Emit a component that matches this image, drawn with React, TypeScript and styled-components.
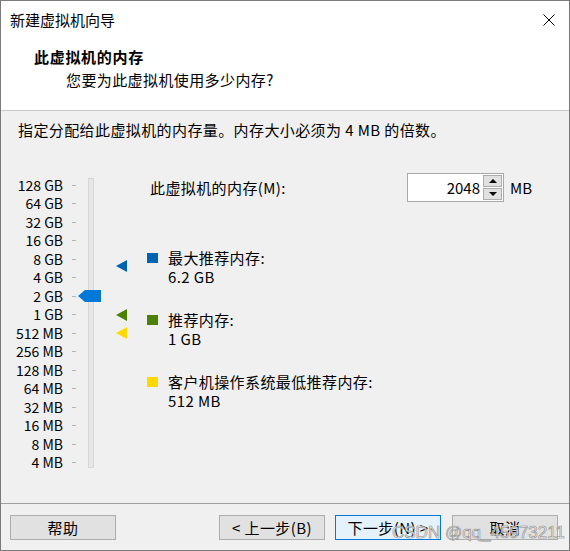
import React from "react";
import styled, { createGlobalStyle } from "styled-components";

const GlobalStyle = createGlobalStyle`
  html, body {
    margin: 0;
    padding: 0;
    background: #ffffff;
  }
  body {
    font-family: "Noto Sans CJK SC", "Noto Sans", sans-serif;
    font-size: 15px;
    color: #000000;
  }
`;

const ROW_H = 18.53;
const FIRST_ROW = 185; // centre of "128 GB" in page coords
const SCALE_TOP = 176; // top of the scale column

const Window = styled.div`
  position: relative;
  width: 570px;
  height: 551px;
  box-sizing: border-box;
  border: 1px solid #7a7a7a;
  display: flex;
  flex-direction: column;
  background: #f0f0f0;
  overflow: hidden;
`;

const TitleBar = styled.div`
  height: 38px;
  background: #ffffff;
  display: flex;
  align-items: center;
  justify-content: space-between;
  padding: 0 14px 0 9px;
  font-size: 15px;
  line-height: 20px;
`;

const CloseButton = styled.div`
  width: 12px;
  height: 12px;
  display: flex;
`;

const Header = styled.div`
  height: 71px;
  background: #ffffff;
  border-bottom: 1px solid #c8c8c8;
  padding-left: 33px;
  box-sizing: content-box;
  display: flex;
  flex-direction: column;
`;

const Heading = styled.div`
  margin-top: 7px;
  font-weight: bold;
  font-size: 15px;
  letter-spacing: 0.7px;
  line-height: 22px;
`;

const SubHeading = styled.div`
  margin-top: 2px;
  padding-left: 32px;
  font-size: 15px;
  letter-spacing: 0.4px;
  line-height: 20px;
`;

const Body = styled.div`
  flex: 1;
  display: flex;
  flex-direction: column;
  padding-top: 9px;
`;

const Intro = styled.div`
  padding-left: 17px;
  line-height: 20px;
  letter-spacing: 0.4px;
`;

const Main = styled.div`
  display: flex;
  margin-top: 15px;
`;

const SliderPanel = styled.div`
  position: relative;
  width: 146px;
  height: 320px;
  display: flex;
`;

const Scale = styled.div`
  margin-top: ${SCALE_TOP - 155}px;
  display: flex;
  flex-direction: column;
`;

const ScaleRow = styled.div`
  height: ${ROW_H}px;
  display: grid;
  grid-template-columns: 62px 4px;
  column-gap: 9px;
  align-items: center;
`;

const ScaleLabel = styled.span`
  text-align: right;
  font-size: 14px;
  line-height: 17px;
  white-space: nowrap;
`;

const Tick = styled.span`
  height: 1px;
  background: #b4b4b4;
`;

const Track = styled.div`
  margin-top: ${178 - 155}px;
  margin-left: 12px;
  width: 4px;
  height: 288px;
  background: #e7e7e7;
  border: 1px solid #d6d6d6;
`;

const Pointer = styled.div<{ $top: number; $left: number; $color: string }>`
  position: absolute;
  left: ${(p) => p.$left}px;
  top: ${(p) => p.$top}px;
  width: 0;
  height: 0;
  border-top: 6px solid transparent;
  border-bottom: 6px solid transparent;
  border-right: 11px solid ${(p) => p.$color};
`;

const Thumb = styled.div<{ $top: number }>`
  position: absolute;
  left: 77px;
  top: ${(p) => p.$top}px;
  height: 12px;
  display: flex;
`;

const ThumbTip = styled.div`
  width: 0;
  height: 0;
  border-top: 6px solid transparent;
  border-bottom: 6px solid transparent;
  border-right: 7px solid #0078d7;
`;

const ThumbBody = styled.div`
  width: 16px;
  height: 12px;
  background: #0078d7;
`;

const RightPanel = styled.div`
  flex: 1;
  display: flex;
  flex-direction: column;
`;

const MemoryRow = styled.div`
  margin-top: 18px;
  height: 29px;
  display: flex;
  align-items: center;
`;

const MemoryLabel = styled.span`
  margin-left: 3px;
  width: 257px;
  letter-spacing: 0.4px;
`;

const SpinBox = styled.div`
  width: 97px;
  height: 29px;
  box-sizing: border-box;
  border: 1px solid #a9a9a9;
  background: #ffffff;
  display: flex;
  align-items: center;
`;

const SpinValue = styled.span`
  flex: 1;
  text-align: right;
  padding-right: 3px;
  font-size: 15px;
`;

const SpinButtons = styled.div`
  width: 19px;
  height: 25px;
  margin-right: 1px;
  display: flex;
  flex-direction: column;
  gap: 1px;
`;

const SpinButton = styled.div`
  flex: 1;
  box-sizing: border-box;
  border: 1px solid #adadad;
  background: #e1e1e1;
  display: flex;
  align-items: center;
  justify-content: center;
`;

const Arrow = styled.div<{ $down?: boolean }>`
  width: 0;
  height: 0;
  border-left: 4px solid transparent;
  border-right: 4px solid transparent;
  ${(p) =>
    p.$down ? "border-top: 4px solid #000;" : "border-bottom: 4px solid #000;"}
`;

const Unit = styled.span`
  margin-left: 6px;
`;

const Legend = styled.div`
  margin-top: 46px;
  display: flex;
  flex-direction: column;
  gap: 24px;
`;

const LegendItem = styled.div`
  display: flex;
  gap: 10px;
`;

const Swatch = styled.div<{ $color: string }>`
  width: 11px;
  height: 10px;
  margin-top: 5px;
  background: ${(p) => p.$color};
`;

const LegendText = styled.div`
  line-height: 19px;
  letter-spacing: 0.4px;
`;

const Footer = styled.div`
  height: 47px;
  border-top: 1px solid #a0a0a0;
  box-sizing: border-box;
  display: flex;
  padding: 11px 11px 0 9px;
`;

const Button = styled.div<{ $primary?: boolean }>`
  width: 106px;
  height: 25px;
  box-sizing: border-box;
  border: 1px solid ${(p) => (p.$primary ? "#0078d7" : "#adadad")};
  background: ${(p) => (p.$primary ? "#e5f1fb" : "#e1e1e1")};
  display: flex;
  align-items: center;
  justify-content: center;
  font-size: 15px;
  line-height: 20px;
  letter-spacing: 0.4px;
`;

const Spacer = styled.div`
  flex: 1;
`;

const Gap = styled.div<{ $w: number }>`
  width: ${(p) => p.$w}px;
`;

const Watermark = styled.div`
  position: absolute;
  left: 391px;
  top: 522px;
  font-family: "Liberation Sans", "Noto Sans", sans-serif;
  font-size: 17px;
  line-height: 20px;
  color: rgba(244, 244, 244, 0.85);
  -webkit-text-stroke: 0.6px #8c8c8c;
  pointer-events: none;
  white-space: nowrap;
`;

const scale = [
  "128 GB",
  "64 GB",
  "32 GB",
  "16 GB",
  "8 GB",
  "4 GB",
  "2 GB",
  "1 GB",
  "512 MB",
  "256 MB",
  "128 MB",
  "64 MB",
  "32 MB",
  "16 MB",
  "8 MB",
  "4 MB",
];

// position on the log2 scale, relative to the slider panel, for a size in MB
const yFor = (mb: number) => {
  const idx = Math.log2(131072 / mb);
  return FIRST_ROW + idx * ROW_H - 155;
};

const markers = [
  { mb: 6.2 * 1024, color: "#0063b1" },
  { mb: 1024, color: "#498205" },
  { mb: 512, color: "#ffd800" },
];

const legend = [
  { color: "#0063b1", title: "最大推荐内存:", value: "6.2 GB" },
  { color: "#498205", title: "推荐内存:", value: "1 GB" },
  { color: "#ffd800", title: "客户机操作系统最低推荐内存:", value: "512 MB" },
];

export default function App() {
  const memory = 2048;

  return (
    <>
      <GlobalStyle />
      <Window>
        <TitleBar>
          <span>新建虚拟机向导</span>
          <CloseButton>
            <svg width="12" height="12" viewBox="0 0 12 12">
              <path d="M0.5 0.5 L11.5 11.5 M11.5 0.5 L0.5 11.5" stroke="#000" strokeWidth="1" />
            </svg>
          </CloseButton>
        </TitleBar>
        <Header>
          <Heading>此虚拟机的内存</Heading>
          <SubHeading>您要为此虚拟机使用多少内存?</SubHeading>
        </Header>
        <Body>
          <Intro>指定分配给此虚拟机的内存量。内存大小必须为 4 MB 的倍数。</Intro>
          <Main>
            <SliderPanel>
              <Scale>
                {scale.map((s) => (
                  <ScaleRow key={s}>
                    <ScaleLabel>{s}</ScaleLabel>
                    <Tick />
                  </ScaleRow>
                ))}
              </Scale>
              <Track />
              {markers.map((m) => (
                <Pointer
                  key={m.color}
                  $left={115}
                  $top={yFor(m.mb) - 6}
                  $color={m.color}
                />
              ))}
              <Thumb $top={yFor(memory) - 6}>
                <ThumbTip />
                <ThumbBody />
              </Thumb>
            </SliderPanel>
            <RightPanel>
              <MemoryRow>
                <MemoryLabel>此虚拟机的内存(M):</MemoryLabel>
                <SpinBox>
                  <SpinValue>{memory}</SpinValue>
                  <SpinButtons>
                    <SpinButton>
                      <Arrow />
                    </SpinButton>
                    <SpinButton>
                      <Arrow $down />
                    </SpinButton>
                  </SpinButtons>
                </SpinBox>
                <Unit>MB</Unit>
              </MemoryRow>
              <Legend>
                {legend.map((l) => (
                  <LegendItem key={l.title}>
                    <Swatch $color={l.color} />
                    <LegendText>
                      {l.title}
                      <br />
                      {l.value}
                    </LegendText>
                  </LegendItem>
                ))}
              </Legend>
            </RightPanel>
          </Main>
        </Body>
        <Footer>
          <Button>帮助</Button>
          <Spacer />
          <Button>&lt; 上一步(B)</Button>
          <Gap $w={10} />
          <Button $primary>下一步(N) &gt;</Button>
          <Gap $w={11} />
          <Button>取消</Button>
        </Footer>
        <Watermark>CSDN @qq_45973211</Watermark>
      </Window>
    </>
  );
}
